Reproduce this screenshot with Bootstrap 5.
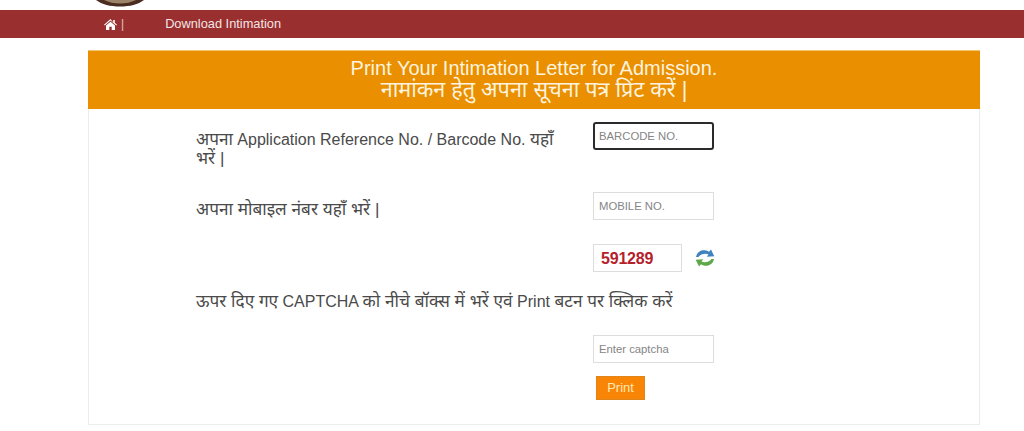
<!DOCTYPE html>
<html lang="hi">
<head>
<meta charset="utf-8">
<title>Print Intimation Letter</title>
<link href="https://cdn.jsdelivr.net/npm/bootstrap@5.3.0/dist/css/bootstrap.min.css" rel="stylesheet">
<style>
html,body{height:431px;overflow:hidden}
body{font-family:"Liberation Sans","Noto Sans",sans-serif;background:#fff;color:#444}
.logo-strip{height:10px;padding-left:96px;overflow:hidden}
.logo-strip svg{display:block}
.top-bar{height:28px;background:#992f2f;color:#f3e4e4;font-size:12.8px;padding-left:104px}
.top-bar svg{display:block}
.top-sep{margin-left:4px;font-size:12px;opacity:.8}
.top-link{margin-left:41px;color:#f3e4e4;text-decoration:none}
.form-panel{margin:12px 44px 0 88px;height:375px;border:1px solid #ececec;border-top:0}
.panel-head{height:59px;background:#e98f00;color:#fdf3df;font-size:20px;line-height:22px;padding-top:6px;text-align:center;margin-left:-1px;margin-right:-1px;border-top:1px solid #f3c56f}
.head-hi{font-size:21.6px}
.panel-body{padding:13px 0 0 107px}
.form-line{display:flex}
.line-label{width:397px;padding-right:30px;padding-top:8px;font-size:16px;line-height:18px;color:#4a4a4a;flex:none}
.hi-text{font-size:17.2px}
.line-field{width:121px;flex:none}
.field-input{display:block;width:121px;height:28px;border:1px solid #ddd;border-radius:0;padding:0 5px;font-size:11.3px;font-family:inherit;color:#555;background:#fff}
.field-input::placeholder{color:#858585;opacity:1}
.field-focus{border:2px solid #2b2b2b;border-radius:3px;padding:0 4px}
.captcha-box{flex:none;width:89px;height:28px;border:1px solid #ddd;color:#b5212b;font-weight:700;font-size:16px;letter-spacing:-.2px;line-height:28px;padding-left:7px}
.print-btn{background:#f98506;border:1px solid #e0851a;color:#ffe9b5;font-size:13px;height:24px;width:49px;padding:0;border-radius:0;margin:13px 0 0 3px;display:block}
.gap-mobile{margin-top:24px}
.gap-captcha{margin-top:24px}
.gap-note{margin-top:20px;padding-top:0;width:100%}
.gap-enter{margin-top:24px}
.refresh-icon{flex:none;margin-left:5px}
</style>
</head>
<body>
<div class="logo-strip">
<svg width="48" height="7" viewBox="0 0 48 7"><path d="M0 0C6 4.500 14 6.500 24 6.500S42 4.500 48 0Z" fill="#4a2c20"/><path d="M8 0C13 2.500 18 3.500 24 3.500S35 2.500 40 0Z" fill="#9c8468"/></svg>
</div>
<div class="top-bar d-flex align-items-center">
<svg width="13" height="11" viewBox="0 0 13 11" aria-hidden="true"><path fill="#fff" d="M6.500 0 0 5.700l.7.800L6.500 1.500l5.800 5 .7-.8-2.200-1.900V1h-1.600v2.400ZM2 6.500V11h3.300V7.700h2.400V11H11V6.500L6.500 2.700Z"/></svg>
<span class="top-sep">|</span>
<a class="top-link" href="#">Download Intimation</a>
</div>
<div class="form-panel">
<div class="panel-head">Print Your Intimation Letter for Admission.<br><span class="head-hi">नामांकन हेतु अपना सूचना पत्र प्रिंट करें |</span></div>
<div class="panel-body">
<div class="form-line">
<div class="line-label"><span class="hi-text">अपना</span> Application Reference No. / Barcode No. <span class="hi-text">यहाँ भरें |</span></div>
<div class="line-field"><input class="field-input field-focus" placeholder="BARCODE NO."></div>
</div>
<div class="form-line gap-mobile">
<div class="line-label"><span class="hi-text">अपना मोबाइल नंबर यहाँ भरें |</span></div>
<div class="line-field"><input class="field-input" placeholder="MOBILE NO."></div>
</div>
<div class="form-line gap-captcha">
<div class="line-label"></div>
<div class="line-field d-flex align-items-center gap-2">
<div class="captcha-box">591289</div>
<svg class="refresh-icon" width="20" height="20" viewBox="0 0 20 20" aria-hidden="true"><path fill="#3f82bf" d="M1 9C2 4 6 1.800 10 2.300c1.500.2 3 .8 4 1.500L16 1.500l3.300 6.800-7.500.5 1.700-2.300C11 5 6 5.500 3.500 9Z"/><path fill="#5fa84a" d="M19 11c-1 5-5 7.200-9 6.700-1.500-.2-3-.8-4-1.500L4 18.500.7 11.700l7.500-.5-1.700 2.300C9 15 14 14.500 16.500 11Z"/></svg>
</div>
</div>
<div class="line-label gap-note"><span class="hi-text">ऊपर दिए गए</span> CAPTCHA <span class="hi-text">को नीचे बॉक्स में भरें एवं</span> Print <span class="hi-text">बटन पर क्लिक करें</span></div>
<div class="form-line gap-enter">
<div class="line-label"></div>
<div class="line-field">
<input class="field-input" placeholder="Enter captcha">
<button class="btn print-btn" type="button">Print</button>
</div>
</div>
</div>
</div>
<script src="https://cdn.jsdelivr.net/npm/bootstrap@5.3.0/dist/js/bootstrap.bundle.min.js"></script>
</body>
</html>
